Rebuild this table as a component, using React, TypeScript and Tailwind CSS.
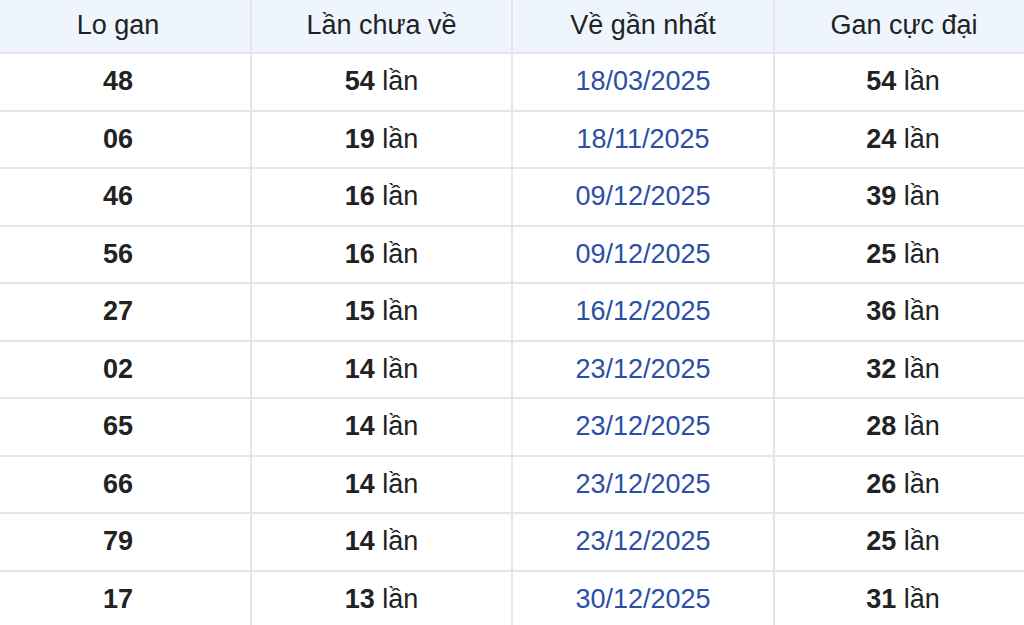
import React from "react";

const rows = [
  ["48", "54", "18/03/2025", "54"],
  ["06", "19", "18/11/2025", "24"],
  ["46", "16", "09/12/2025", "39"],
  ["56", "16", "09/12/2025", "25"],
  ["27", "15", "16/12/2025", "36"],
  ["02", "14", "23/12/2025", "32"],
  ["65", "14", "23/12/2025", "28"],
  ["66", "14", "23/12/2025", "26"],
  ["79", "14", "23/12/2025", "25"],
  ["17", "13", "30/12/2025", "31"],
];

const cols = "grid grid-cols-[250px_261px_262px_251px]";

export default function App() {
  return (
    <div
      className="w-[1024px] h-[625px] overflow-hidden bg-white text-[27px] text-[#222]"
      style={{ fontFamily: '"Liberation Sans", Arial, sans-serif' }}
    >
      <div className={`${cols} h-[54px] bg-[#eef5fd] border-b-2 border-[#e3e5e8]`}>
        {["Lo gan", "Lần chưa về", "Về gần nhất", "Gan cực đại"].map((h, i) => (
          <div
            key={h}
            className={`flex items-center justify-center pb-[2px] ${i > 0 ? "border-l-2 border-[#e3e5e8]" : "pr-[14px]"} ${i === 3 ? "pl-[9px]" : ""}`}
          >
            {h}
          </div>
        ))}
      </div>
      {rows.map((r, idx) => (
        <div
          key={idx}
          className={`${cols} ${idx % 2 === 0 ? "h-[58px]" : "h-[57px]"} border-b-2 border-[#e6e6e6]`}
        >
          <div className="flex items-center justify-center font-bold pb-[1px] pr-[14px]">{r[0]}</div>
          <div className="flex items-center justify-center border-l-2 border-[#e6e6e6] pb-[1px]">
            <span className="font-bold">{r[1]}</span>
            <span>&nbsp;lần</span>
          </div>
          <div className="flex items-center justify-center border-l-2 border-[#e6e6e6] text-[#2b4fa6] pb-[1px]">
            {r[2]}
          </div>
          <div className="flex items-center justify-center border-l-2 border-[#e6e6e6] pb-[1px] pl-[7px]">
            <span className="font-bold">{r[3]}</span>
            <span>&nbsp;lần</span>
          </div>
        </div>
      ))}
    </div>
  );
}
